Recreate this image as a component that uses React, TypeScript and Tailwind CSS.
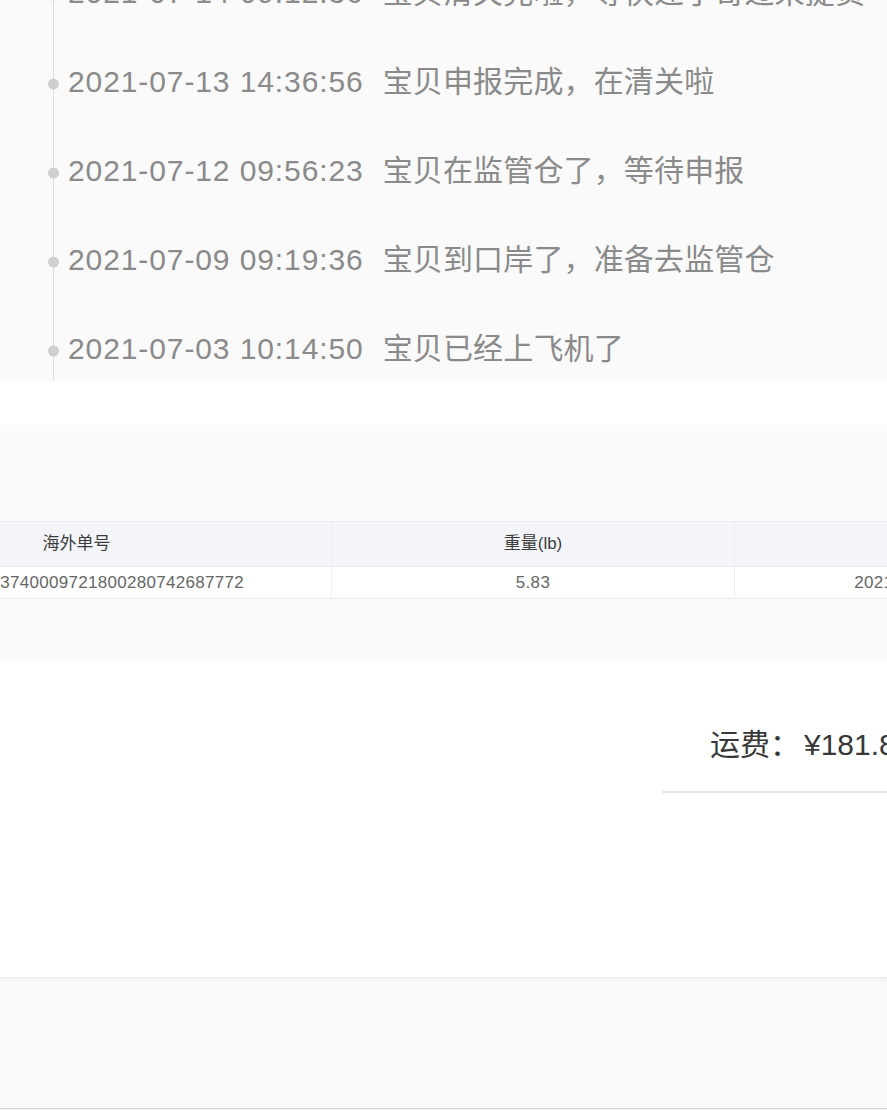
const logs: [string, string][] = [
  ['2021-07-14 09:12:36', '宝贝清关完啦，等快递小哥过来提货'],
  ['2021-07-13 14:36:56', '宝贝申报完成，在清关啦'],
  ['2021-07-12 09:56:23', '宝贝在监管仓了，等待申报'],
  ['2021-07-09 09:19:36', '宝贝到口岸了，准备去监管仓'],
  ['2021-07-03 10:14:50', '宝贝已经上飞机了'],
]

const columns = ['海外单号', '重量(lb)', '入库时间']
const row = ['JD00160811373740009721800280742687772', '5.83', '2021-07-02 10:22:35']

export default function App() {
  return (
    <div className="w-[887px] overflow-hidden bg-white font-['Liberation_Sans','Noto_Sans_CJK_SC',sans-serif]">
      {/* logistics timeline (scrolled, first entry cut off) */}
      <section className="h-[381px] overflow-hidden bg-[#fafafa]">
        <ul className="-mt-[51px] ml-[53px] border-l border-[#dcdcdc]">
          {logs.map(([time, text]) => (
            <li
              key={time}
              className="relative flex h-[88.8px] items-center whitespace-nowrap pl-[14px] text-[30px] leading-none text-[#8a8a8a]"
            >
              <span className="absolute left-[-6px] top-[calc(50%+2px)] h-[11px] w-[11px] -translate-y-1/2 rounded-full bg-[#cfcfcf]" />
              <span className="tracking-[0.9px]">{time}</span>
              <span className="ml-[19px] tracking-[0.15px]">{text}</span>
            </li>
          ))}
        </ul>
      </section>

      <div className="h-[44px] bg-white" />

      {/* parcel table */}
      <section className="h-[235px] overflow-hidden bg-[#fafafa] pt-[96px]">
        <div className="-ml-[178px] grid w-[1316px] grid-cols-[510px_403px_403px] border-t border-[#ebeef5] text-[17px]">
          {columns.map((c) => (
            <div
              key={c}
              className="flex h-[45px] items-center justify-center border-r border-b border-[#ebeef5] bg-[#f4f5f9] text-[#3c3c3c]"
            >
              {c}
            </div>
          ))}
          {row.map((v, i) => (
            <div
              key={i}
              className={`flex h-[32px] items-center overflow-hidden whitespace-nowrap border-r border-b border-[#ebeef5] bg-white tracking-[0.3px] text-[#666] ${
                i === 0 ? 'justify-end pr-[87px]' : 'justify-center'
              }`}
            >
              {v}
            </div>
          ))}
        </div>
      </section>

      {/* shipping fee */}
      <section className="h-[317px] overflow-hidden bg-white pt-[62px]">
        <div className="ml-[662px] w-[400px] whitespace-nowrap border-b-2 border-[#e3e3e3] pb-[24px] pl-[48px] text-[30px] leading-[45px] text-[#383838]">
          运费：<span className="ml-[4px]">¥181.85</span>
        </div>
      </section>

      <section className="h-[131px] border-t border-[#ebebeb] bg-[#fafafa] shadow-[inset_0_4px_6px_-3px_rgba(0,0,0,0.05)]" />
      <div className="h-[2px] border-t border-[#d6d6d6] bg-[#ececec]" />
    </div>
  )
}
